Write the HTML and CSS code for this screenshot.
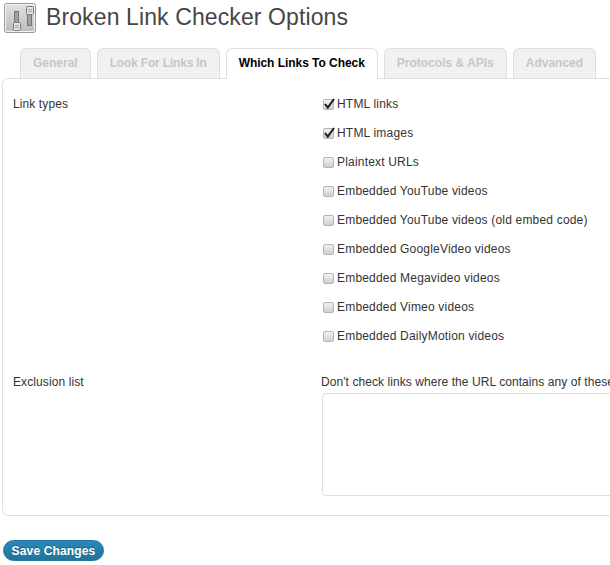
FILE: index.html
```html
<!DOCTYPE html>
<html lang="en">
  <head>
    <meta charset="utf-8" />
    <title>Broken Link Checker Options</title>
    <link rel="stylesheet" href="styles.css">
  </head>
  <body>
    <header class="page-title">
      <span class="page-icon">
        <svg width="32" height="30" viewBox="0 0 32 30">
          <defs>
            <linearGradient id="iconBg" x1="0" y1="0" x2="0" y2="1">
              <stop offset="0" stop-color="#e2e2e2" />
              <stop offset="1" stop-color="#bcbcbc" />
            </linearGradient>
          </defs>
          <rect x="0.5" y="0.5" width="31" height="29" rx="2" fill="url(#iconBg)" stroke="#979797" />
          <rect x="1.500" y="1.500" width="29" height="27" rx="1" fill="none" stroke="#f4f4f4" />
          <rect x="10.500" y="8.500" width="4" height="14" fill="#a0a0a0" stroke="#747474" />
          <rect x="23.500" y="8.500" width="4" height="14" fill="#a0a0a0" stroke="#747474" />
          <rect x="9.500" y="19.500" width="7" height="8" rx="1" fill="#e4e4e4" stroke="#7a7a7a" />
          <rect x="22.500" y="3.500" width="7" height="8" rx="1" fill="#e4e4e4" stroke="#7a7a7a" />
          <path d="M11 22.500h4M11 24.500h4M24 6.500h4M24 8.500h4" stroke="#a5a5a5" />
        </svg>
      </span>
      <h1>Broken Link Checker Options</h1>
    </header>

    <nav class="tabs">
      <a class="tab">General</a>
      <a class="tab tab-tight">Look For Links In</a>
      <a class="tab tab-active">Which Links To Check</a>
      <a class="tab">Protocols &amp; APIs</a>
      <a class="tab">Advanced</a>
    </nav>

    <section class="panel">
      <div class="row row-types">
        <div class="row-label">Link types</div>
        <div class="checks">
          <label class="check">
            <span class="box">
              <svg width="13" height="12" viewBox="0 0 13 12"><path d="M2 6l2.800 3.500L11 1" fill="none" stroke="#1a1a1a" stroke-width="2" /></svg>
            </span>
            HTML links
          </label>
          <label class="check">
            <span class="box">
              <svg width="13" height="12" viewBox="0 0 13 12"><path d="M2 6l2.800 3.500L11 1" fill="none" stroke="#1a1a1a" stroke-width="2" /></svg>
            </span>
            HTML images
          </label>
          <label class="check"><span class="box"></span>Plaintext URLs</label>
          <label class="check"><span class="box"></span>Embedded YouTube videos</label>
          <label class="check"><span class="box"></span>Embedded YouTube videos (old embed code)</label>
          <label class="check"><span class="box"></span>Embedded GoogleVideo videos</label>
          <label class="check"><span class="box"></span>Embedded Megavideo videos</label>
          <label class="check"><span class="box"></span>Embedded Vimeo videos</label>
          <label class="check"><span class="box"></span>Embedded DailyMotion videos</label>
        </div>
      </div>
      <div class="row row-exclusion">
        <div class="row-label">Exclusion list</div>
        <div class="exclusion">
          <div class="exclusion-note">Don't check links where the URL contains any of these words (one per line) :</div>
          <div class="exclusion-input"></div>
        </div>
      </div>
    </section>

    <button class="save-btn">Save Changes</button>
  </body>
</html>
```

FILE: styles.css
```css
html, body {
  margin: 0;
  padding: 0;
  width: 610px;
  height: 565px;
  overflow: hidden;
  background: #fff;
}

body {
  font-family: "Liberation Sans", Arial, sans-serif;
  font-size: 12px;
  letter-spacing: 0.19px;
  color: #333;
}

.page-title {
  display: flex;
  align-items: flex-start;
  height: 48px;
  padding: 3px 0 0 4px;
  box-sizing: border-box;
}

.page-icon {
  display: block;
  width: 32px;
  height: 30px;
}

.page-title h1 {
  margin: 0 0 0 10px;
  font-size: 23px;
  font-weight: normal;
  line-height: 29px;
  letter-spacing: 0.11px;
  color: #464646;
  white-space: nowrap;
}

.tabs {
  display: flex;
  gap: 6px;
  height: 31px;
  margin-left: 20px;
  position: relative;
  z-index: 1;
}

.tab {
  display: block;
  box-sizing: border-box;
  height: 30px;
  padding: 0 12px;
  line-height: 28px;
  font-size: 12px;
  font-weight: bold;
  letter-spacing: 0;
  color: #c7c7c7;
  background: #f1f1f1;
  border: 1px solid #dfdfdf;
  border-bottom: 0;
  border-radius: 6px 6px 0 0;
  white-space: nowrap;
}

.tab-tight {
  letter-spacing: -0.18px;
}

.tab-active {
  height: 31px;
  letter-spacing: -0.05px;
  color: #000;
  background: #fff;
}

.panel {
  box-sizing: border-box;
  width: 640px;
  height: 438px;
  margin: -1px 0 0 2px;
  border: 1px solid #dfdfdf;
  border-radius: 6px;
  background: #fff;
}

.row {
  display: flex;
}

.row-label {
  width: 308px;
  margin-left: 10px;
  flex: none;
  line-height: 16px;
  letter-spacing: 0.1px;
}

.row-types {
  padding-top: 17px;
}

.checks {
  display: flex;
  flex-direction: column;
  gap: 13px;
  margin-left: 2px;
}

.check {
  display: flex;
  align-items: center;
  height: 16px;
  white-space: nowrap;
}

.box {
  display: block;
  box-sizing: border-box;
  width: 11px;
  height: 11px;
  margin-right: 3px;
  border: 1px solid #b4b4b4;
  border-radius: 2px;
  background: linear-gradient(#f2f2f2, #cfcfcf);
  position: relative;
}

.box svg {
  position: absolute;
  left: -1px;
  top: -2px;
}

.row-exclusion {
  padding-top: 30px;
}

.exclusion {
  flex: 1;
  min-width: 0;
}

.exclusion-note {
  height: 16px;
  line-height: 16px;
  letter-spacing: 0.07px;
  white-space: nowrap;
}

.exclusion-input {
  box-sizing: border-box;
  height: 103px;
  margin: 3px 0 0 1px;
  border: 1px solid #dfdfdf;
  border-radius: 4px;
  background: #fff;
}

.save-btn {
  display: block;
  width: 101px;
  height: 21px;
  margin: 24px 0 0 3px;
  padding: 0;
  border: 1px solid #21759b;
  border-radius: 11px;
  background: linear-gradient(#2a88b6, #21759b);
  color: #fff;
  font-family: inherit;
  font-size: 12px;
  font-weight: bold;
  letter-spacing: 0.15px;
  text-shadow: 0 -1px 0 rgba(0, 0, 0, 0.3);
}
```
